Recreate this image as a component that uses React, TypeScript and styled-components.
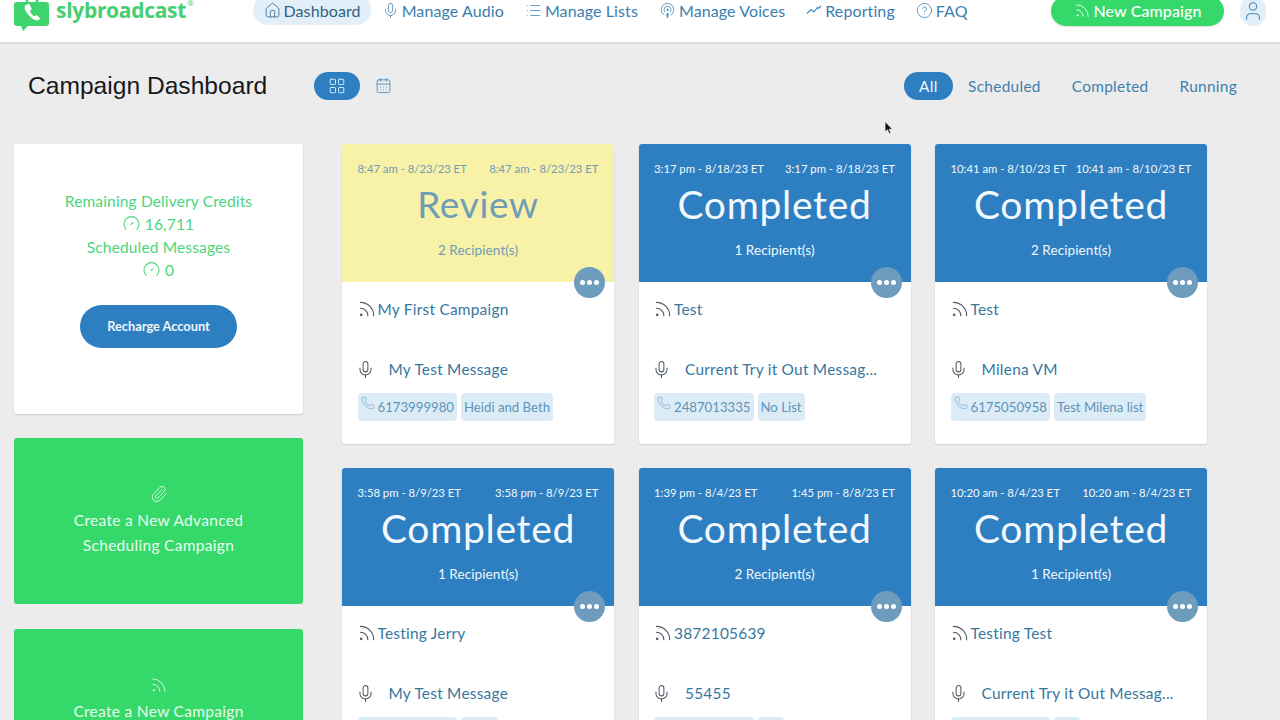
import React from 'react';
import styled, { createGlobalStyle } from 'styled-components';
import {
  House, Mic, List, Podcast, CircleHelp, Rss, User, Phone, Paperclip, LayoutGrid, CalendarDays,
} from 'lucide-react';

const Global = createGlobalStyle`
  html, body { margin: 0; padding: 0; height: 720px; overflow: hidden; background: #ececec; }
  body { font-family: Lato, "Open Sans", sans-serif; }
  * { box-sizing: border-box; }
`;

const Page = styled.div`
  position: relative;
  width: 1280px;
  height: 732px;
  margin-top: -12px;
  overflow: hidden;
  background: #ececec;
`;

const Header = styled.header`
  height: 56px;
  padding: 0 14px 10px 14px;
  display: flex;
  align-items: center;
  background: #fff;
  border-bottom: 2px solid #dcdcdc;
`;

const Logo = styled.div`
  width: 239px;
  display: flex;
  align-items: center;
  gap: 7px;
  color: #45cf72;
  font: 700 21px/30px "Open Sans", sans-serif;
  letter-spacing: -0.3px;
  sup { font-size: 8px; line-height: 8px; font-weight: 400; align-self: flex-start; margin: 10px 0 0 -6px; }
`;

const Nav = styled.nav`
  display: flex;
  align-items: center;
`;

const NavItem = styled.a<{ $active?: boolean }>`
  height: 30px;
  display: flex;
  align-items: center;
  gap: 3px;
  padding: 0 10.5px;
  border-radius: 15px;
  font-size: 16px;
  letter-spacing: 0.1px;
  color: ${p => (p.$active ? '#2f5f86' : '#3a7eae')};
  background: ${p => (p.$active ? '#e2eff8' : 'transparent')};
  svg { flex: none; color: ${p => (p.$active ? '#3c6d93' : '#4a8ab8')}; }
`;

const NewCampaign = styled.button`
  position: absolute;
  top: 8px;
  left: 1051px;
  width: 173px;
  height: 30px;
  padding: 0 0 2px;
  border: 0;
  border-radius: 15px;
  background: #35d96a;
  color: #fff;
  font: 500 16px Lato, sans-serif;
  letter-spacing: 0.1px;
  display: flex;
  align-items: center;
  justify-content: center;
  gap: 3px;
  box-shadow: 0 1px 2px rgba(0, 0, 0, 0.15);
`;

const Avatar = styled.div`
  position: absolute;
  top: 8px;
  left: 1240px;
  width: 26px;
  height: 30px;
  border-radius: 13px;
  background: #e2eff8;
  color: #4a8ab8;
  display: flex;
  align-items: center;
  justify-content: center;
`;

const Toolbar = styled.div`
  height: 28px;
  margin: 28px 0 44px;
  padding: 0 43px 0 28px;
  display: flex;
  align-items: center;
`;

const Title = styled.h1`
  width: 239px;
  margin: 0 47px 0 0;
  font: 400 24.6px/28px "Liberation Sans", sans-serif;
  color: #16191c;
  white-space: nowrap;
`;

const ViewToggle = styled.div`
  width: 46px;
  height: 28px;
  margin-right: 15px;
  padding-bottom: 1px;
  border-radius: 14px;
  display: flex;
  align-items: center;
  justify-content: center;
  color: #d7ebf8;
  background: #2d7fc1;
`;

const CalendarSlot = styled.div`
  display: flex;
  margin-bottom: 2px;
  color: #4a8ab8;
`;

const Filters = styled.div`
  margin-left: auto;
  display: flex;
  align-items: center;
  gap: 15px;
`;

const Filter = styled.a<{ $active?: boolean }>`
  height: 28px;
  padding: 0 ${p => (p.$active ? 15.5 : 0)}px;
  margin-right: ${p => (p.$active ? 0 : 16)}px;
  border-radius: 14px;
  font-size: 15.4px;
  letter-spacing: 0.3px;
  line-height: 28px;
  color: ${p => (p.$active ? '#eef6fb' : '#3f81ad')};
  background: ${p => (p.$active ? '#2d7fc1' : 'transparent')};
  &:last-child { margin-right: 0; }
`;

const Main = styled.main`
  padding-left: 14px;
  display: flex;
  gap: 39px;
  align-items: flex-start;
`;

const Sidebar = styled.aside`
  width: 289px;
  flex: none;
  display: flex;
  flex-direction: column;
  gap: 24px;
`;

const CreditCard = styled.section`
  height: 270px;
  padding-top: 45px;
  display: flex;
  flex-direction: column;
  align-items: center;
  background: #fff;
  border-radius: 3px;
  box-shadow: 0 1px 2px rgba(0, 0, 0, 0.12);
`;

const CreditLine = styled.div`
  height: 23px;
  display: flex;
  align-items: center;
  gap: 5px;
  font-size: 15.5px;
  letter-spacing: 0.15px;
  color: #4cd57c;
`;

const Recharge = styled.button`
  width: 157px;
  height: 43px;
  margin-top: 24px;
  padding: 0 0 2px;
  border: 0;
  border-radius: 22px;
  background: #2d7fc1;
  color: #eef6fb;
  font: 700 12.8px Lato, sans-serif;
`;

const CreateCard = styled.section`
  height: 166px;
  padding-top: 47px;
  display: flex;
  flex-direction: column;
  align-items: center;
  text-align: center;
  background: #35d96a;
  border-radius: 3px;
  color: #e8fbef;
  font-size: 15.5px;
  letter-spacing: 0.3px;
  line-height: 25px;
  svg { margin-bottom: 5px; display: block; }
  & + & { margin-top: 1px; }
`;

const Grid = styled.div`
  display: grid;
  grid-template-columns: repeat(3, 272px);
  column-gap: 24.5px;
  row-gap: 24px;
`;

const Card = styled.article`
  height: 300px;
  background: #fff;
  border-radius: 3px;
  box-shadow: 0 1px 2px rgba(0, 0, 0, 0.12);
`;

const CardTop = styled.div<{ $review: boolean }>`
  position: relative;
  height: 138px;
  padding-top: 17px;
  text-align: center;
  border-radius: 3px 3px 0 0;
  background: ${p => (p.$review ? '#f8f1a8' : '#2d7fc1')};
  color: ${p => (p.$review ? '#6f9db5' : '#f2f8fc')};
`;

const Times = styled.div`
  padding: 0 15.5px;
  display: flex;
  justify-content: space-between;
  font-size: 11.3px;
  line-height: 15px;
  white-space: nowrap;
`;

const Status = styled.div<{ $review: boolean }>`
  margin-top: 5px;
  font-size: ${p => (p.$review ? 37 : 39)}px;
  font-weight: 400;
  line-height: 46px;
  letter-spacing: 0.7px;
`;

const Recipients = styled.div`
  margin-top: 14px;
  font-size: 13.5px;
  line-height: 18px;
  letter-spacing: 0.1px;
`;

const Dots = styled.button`
  position: absolute;
  right: 9px;
  bottom: -16px;
  width: 31px;
  height: 31px;
  padding: 0;
  border: 0;
  border-radius: 50%;
  background: #6d9cbd;
  display: flex;
  align-items: center;
  justify-content: center;
  gap: 2px;
  i { width: 5px; height: 5px; border-radius: 50%; background: #fff; }
`;

const CardBody = styled.div`
  padding: 16px 15.5px 0;
`;

const NameRow = styled.div`
  height: 22px;
  display: flex;
  align-items: center;
  gap: 1px;
  font-size: 15.4px;
  letter-spacing: 0.25px;
  color: #36779f;
  svg { color: #4d5862; flex: none; margin-left: -1px; }
`;

const MessageRow = styled(NameRow)`
  margin-top: 38px;
  gap: 0;
  white-space: nowrap;
  svg { margin: 0 14px 0 -2px; }
`;

const Chips = styled.div`
  margin-top: 13px;
  display: flex;
  gap: 4px;
`;

const Chip = styled.span`
  height: 28px;
  padding: 0 3px;
  display: flex;
  align-items: center;
  border-radius: 4px;
  background: #dcecf6;
  color: #5d94b8;
  font-size: 13.2px;
  white-space: nowrap;
  svg { margin: -8px 3px 0 0; color: #6ea3c6; }
`;

const Cursor = styled.svg`
  position: absolute;
  left: 884px;
  top: 133px;
`;

const Trend = () => (
  <svg width="16" height="16" viewBox="0 0 16 16" fill="none" stroke="currentColor" strokeWidth="1.2">
    <path d="M1 11.5l4-4 3 2.5 3.5-4.500 1 1 2.500-2.500" />
  </svg>
);

const GaugeIcon = () => (
  <svg width="17" height="17" viewBox="0 0 17 17" fill="none" stroke="currentColor" strokeWidth="1.1">
    <path d="M3.300 14.500a7.500 7.500 0 1 1 10.400 0" />
    <path d="M7.500 9.500l3-2" />
  </svg>
);

const LogoMark = () => (
  <svg width="35" height="42" viewBox="0 0 35 42">
    <path d="M13 14V9.500h10V14" fill="none" stroke="#3ed56f" strokeWidth="2.500" />
    <path d="M3 13h29a3 3 0 0 1 3 3v18a3 3 0 0 1-3 3H14l-5 5-2-5H3a3 3 0 0 1-3-3V16a3 3 0 0 1 3-3z" fill="#3ed56f" />
    <path d="M12.500 15.500c-2 1-2.500 3-1.300 5.500 2 4 5 8 10 10 2.300.8 4 .3 5-1.500l-3.500-3.500-2.500 1.300c-2-1.300-3.500-3.300-4.300-5.300l2-2-2.400-5z" fill="#fff" />
  </svg>
);

const cards = [
  { a: '8:47 am - 8/23/23 ET', b: '8:47 am - 8/23/23 ET', status: 'Review', n: 2, name: 'My First Campaign', msg: 'My Test Message', phone: '6173999980', list: 'Heidi and Beth' },
  { a: '3:17 pm - 8/18/23 ET', b: '3:17 pm - 8/18/23 ET', status: 'Completed', n: 1, name: 'Test', msg: 'Current Try it Out Messag...', phone: '2487013335', list: 'No List' },
  { a: '10:41 am - 8/10/23 ET', b: '10:41 am - 8/10/23 ET', status: 'Completed', n: 2, name: 'Test', msg: 'Milena VM', phone: '6175050958', list: 'Test Milena list' },
  { a: '3:58 pm - 8/9/23 ET', b: '3:58 pm - 8/9/23 ET', status: 'Completed', n: 1, name: 'Testing Jerry', msg: 'My Test Message', phone: '6173999980', list: 'Heidi' },
  { a: '1:39 pm - 8/4/23 ET', b: '1:45 pm - 8/8/23 ET', status: 'Completed', n: 2, name: '3872105639', msg: '55455', phone: '6173999980', list: 'List' },
  { a: '10:20 am - 8/4/23 ET', b: '10:20 am - 8/4/23 ET', status: 'Completed', n: 1, name: 'Testing Test', msg: 'Current Try it Out Messag...', phone: '6173999980', list: 'List' },
];

export default function App() {
  return (
    <Page>
      <Global />
      <Header>
        <Logo>
          <LogoMark />
          <span>slybroadcast</span>
          <sup>®</sup>
        </Logo>
        <Nav>
          <NavItem $active><House size={17} strokeWidth={1.2} />Dashboard</NavItem>
          <NavItem><Mic size={17} strokeWidth={1.2} />Manage Audio</NavItem>
          <NavItem><List size={17} strokeWidth={1.2} />Manage Lists</NavItem>
          <NavItem><Podcast size={17} strokeWidth={1.2} />Manage Voices</NavItem>
          <NavItem><Trend />Reporting</NavItem>
          <NavItem><CircleHelp size={17} strokeWidth={1.2} />FAQ</NavItem>
        </Nav>
        <NewCampaign><Rss size={17} strokeWidth={1.2} />New Campaign</NewCampaign>
        <Avatar><User size={22} strokeWidth={1.2} /></Avatar>
      </Header>

      <Toolbar>
        <Title>Campaign Dashboard</Title>
        <ViewToggle><LayoutGrid size={18} strokeWidth={1.3} /></ViewToggle>
        <CalendarSlot><CalendarDays size={17} strokeWidth={1.2} /></CalendarSlot>
        <Filters>
          <Filter $active>All</Filter>
          <Filter>Scheduled</Filter>
          <Filter>Completed</Filter>
          <Filter>Running</Filter>
        </Filters>
      </Toolbar>

      <Main>
        <Sidebar>
          <CreditCard>
            <CreditLine>Remaining Delivery Credits</CreditLine>
            <CreditLine><GaugeIcon />16,711</CreditLine>
            <CreditLine>Scheduled Messages</CreditLine>
            <CreditLine><GaugeIcon />0</CreditLine>
            <Recharge>Recharge Account</Recharge>
          </CreditCard>
          <CreateCard>
            <Paperclip size={18} strokeWidth={1.2} />
            Create a New Advanced<br />Scheduling Campaign
          </CreateCard>
          <CreateCard>
            <Rss size={18} strokeWidth={1.2} />
            Create a New Campaign
          </CreateCard>
        </Sidebar>

        <Grid>
          {cards.map((c, i) => (
            <Card key={i}>
              <CardTop $review={c.status === 'Review'}>
                <Times><span>{c.a}</span><span>{c.b}</span></Times>
                <Status $review={c.status === 'Review'}>{c.status}</Status>
                <Recipients>{c.n} Recipient(s)</Recipients>
                <Dots><i /><i /><i /></Dots>
              </CardTop>
              <CardBody>
                <NameRow><Rss size={20} strokeWidth={1.3} />{c.name}</NameRow>
                <MessageRow><Mic size={19} strokeWidth={1.3} />{c.msg}</MessageRow>
                <Chips>
                  <Chip><Phone size={14} strokeWidth={1.1} />{c.phone}</Chip>
                  <Chip>{c.list}</Chip>
                </Chips>
              </CardBody>
            </Card>
          ))}
        </Grid>
      </Main>

      <Cursor width="10" height="14" viewBox="0 0 10 14">
        <path d="M1 0.500v10.500l2.500-2.200 1.700 4 1.700-.7-1.700-3.900h3.300z" fill="#111" stroke="#fff" strokeWidth="0.7" />
      </Cursor>
    </Page>
  );
}
